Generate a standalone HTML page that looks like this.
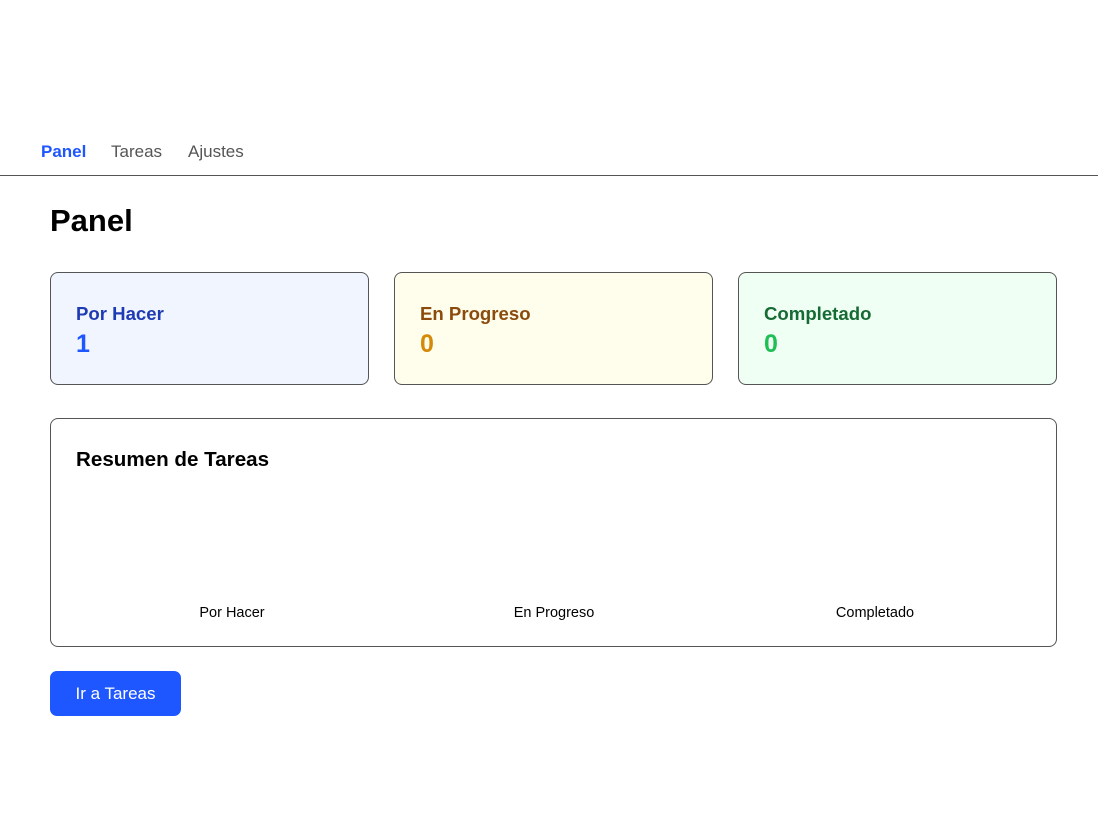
<!DOCTYPE html>
<html><head><meta charset="utf-8"><style>
*{box-sizing:border-box;margin:0;padding:0}
body{width:1100px;height:825px;background:#fff;font-family:"Liberation Sans",sans-serif;position:relative;overflow:hidden}
.nav a{position:absolute;top:142px;font-size:17px;color:#555;text-decoration:none}
.line{position:absolute;top:175px;left:0;width:1098px;height:1px;background:#555}
h1{position:absolute;left:50px;top:203px;font-size:31px;font-weight:bold;color:#000}
.card{position:absolute;top:272px;width:319px;height:113px;border:1px solid #555;border-radius:8px;padding:30px 25px}
.card .t{font-size:18.6px;font-weight:bold}
.card .v{font-size:25px;font-weight:bold;margin-top:5px}
.sum{position:absolute;left:50px;top:418px;width:1007px;height:229px;border:1px solid #555;border-radius:8px}
.sum h2{position:absolute;left:25px;top:29px;font-size:20.6px;font-weight:bold;color:#000}
.lab{position:absolute;top:186px;font-size:14.5px;color:#000;width:200px;text-align:center}
.btn{position:absolute;left:50px;top:671px;width:131px;height:45px;background:#1e56ff;color:#fff;border-radius:7px;font-size:17px;text-align:center;line-height:45px}
</style></head><body>
<div class="nav"><a style="left:41px;color:#1e56ff;font-weight:bold">Panel</a><a style="left:111px">Tareas</a><a style="left:188px">Ajustes</a></div>
<div class="line"></div>
<h1>Panel</h1>
<div class="card" style="left:50px;background:#f0f5ff"><div class="t" style="color:#1f3bb3">Por Hacer</div><div class="v" style="color:#1e56ff">1</div></div>
<div class="card" style="left:394px;background:#fffdeb"><div class="t" style="color:#8a4b0c">En Progreso</div><div class="v" style="color:#d48a08">0</div></div>
<div class="card" style="left:738px;background:#f0fff4"><div class="t" style="color:#166b34">Completado</div><div class="v" style="color:#1fbf55">0</div></div>
<div class="sum"><h2>Resumen de Tareas</h2>
<div class="lab" style="left:81px">Por Hacer</div>
<div class="lab" style="left:403px">En Progreso</div>
<div class="lab" style="left:724px">Completado</div></div>
<div class="btn">Ir a Tareas</div>
</body></html>
